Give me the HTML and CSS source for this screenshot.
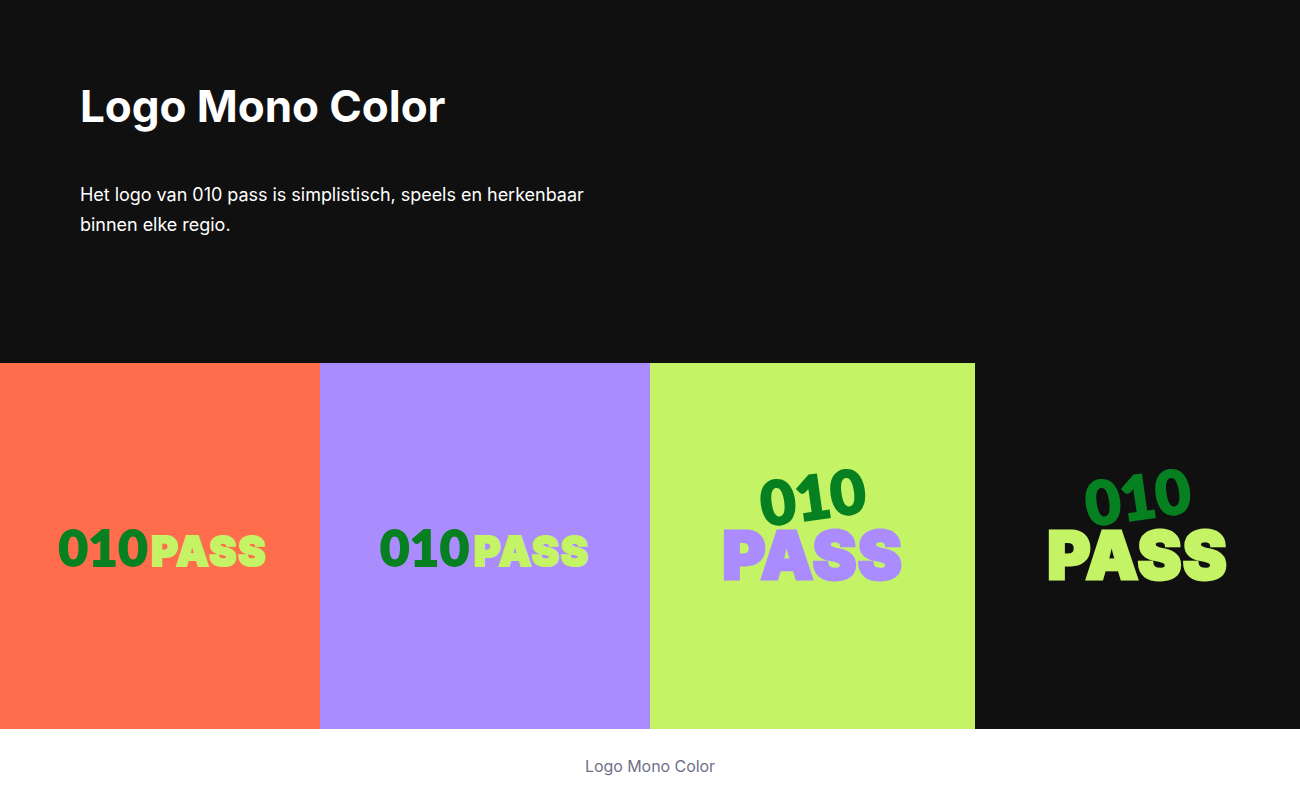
FILE: index.html
```html
<!DOCTYPE html>
<html lang="nl">
<head>
<meta charset="utf-8">
<title>Logo Mono Color</title>
<link rel="stylesheet" href="styles.css">
</head>
<body>
<section class="hero">
  <h1 class="title">Logo Mono Color</h1>
  <p class="intro">Het logo van 010 pass is simplistisch, speels en herkenbaar binnen elke regio.</p>
</section>
<section class="tiles">
  <div class="tile tile-orange">
    <div class="logo-row logo-row-a"><span class="num">010</span><span class="pass">PASS</span></div>
  </div>
  <div class="tile tile-purple">
    <div class="logo-row logo-row-b"><span class="num">010</span><span class="pass">PASS</span></div>
  </div>
  <div class="tile tile-lime">
    <div class="logo-stack"><span class="num-big">010</span><span class="pass-big pass-purple">PASS</span></div>
  </div>
  <div class="tile tile-dark">
    <div class="logo-stack"><span class="num-big">010</span><span class="pass-big">PASS</span></div>
  </div>
</section>
<footer class="caption">Logo Mono Color</footer>
</body>
</html>
```
FILE: styles.css
```css
* { box-sizing: border-box; }
html, body { margin: 0; padding: 0; }
body { width: 1300px; height: 800px; overflow: hidden; background: #fff; font-family: Inter, "Liberation Sans", sans-serif; }
.hero { height: 363px; background: #101010; color: #fff; padding: 78px 80px 0; }
.title { margin: 0; font-size: 44px; line-height: 56px; font-weight: 700; letter-spacing: -0.05px; }
.intro { margin: 46px 0 0; width: 540px; font-size: 18px; line-height: 30px; font-weight: 400; letter-spacing: -0.03px; }
.tiles { display: grid; grid-template-columns: 320px 330px 325px 325px; height: 366px; }
.tile { display: flex; align-items: center; justify-content: center; }
.tile-orange { background: #ff6d4d; }
.tile-purple { background: #ab8cff; }
.tile-lime { background: #c4f366; }
.tile-dark { background: #101010; }
.logo-row { display: flex; align-items: baseline; margin-top: 1px; font-family: Inter, sans-serif; font-weight: 900; line-height: 1; }
.logo-row-a { gap: 3px; margin-left: 6px; }
.logo-row-b { gap: 4px; margin-left: 0; }
.num { font-family: Lato, sans-serif; font-size: 50px; font-weight: 900; letter-spacing: 0.9px; color: #068020; -webkit-text-stroke: 2px #068020; }
.pass { font-size: 41px; letter-spacing: 1.7px; color: #c4f366; -webkit-text-stroke: 2px #c4f366; }
.logo-stack { display: flex; flex-direction: column; align-items: center; margin-bottom: 38px; font-family: Inter, sans-serif; font-weight: 900; line-height: 1; }
.num-big { font-family: Lato, sans-serif; font-size: 60px; font-weight: 900; line-height: 56px; letter-spacing: 0.4px; color: #068020; -webkit-text-stroke: 2.4px #068020; transform: rotate(-8deg); }
.pass-big { font-size: 66px; line-height: 62px; letter-spacing: 1.2px; color: #c4f366; -webkit-text-stroke: 3px #c4f366; }
.pass-purple { color: #ab8cff; -webkit-text-stroke-color: #ab8cff; }
.caption { height: 71px; display: flex; align-items: center; justify-content: center; padding-top: 2px; color: #71708a; font-size: 16px; letter-spacing: -0.05px; }
```
